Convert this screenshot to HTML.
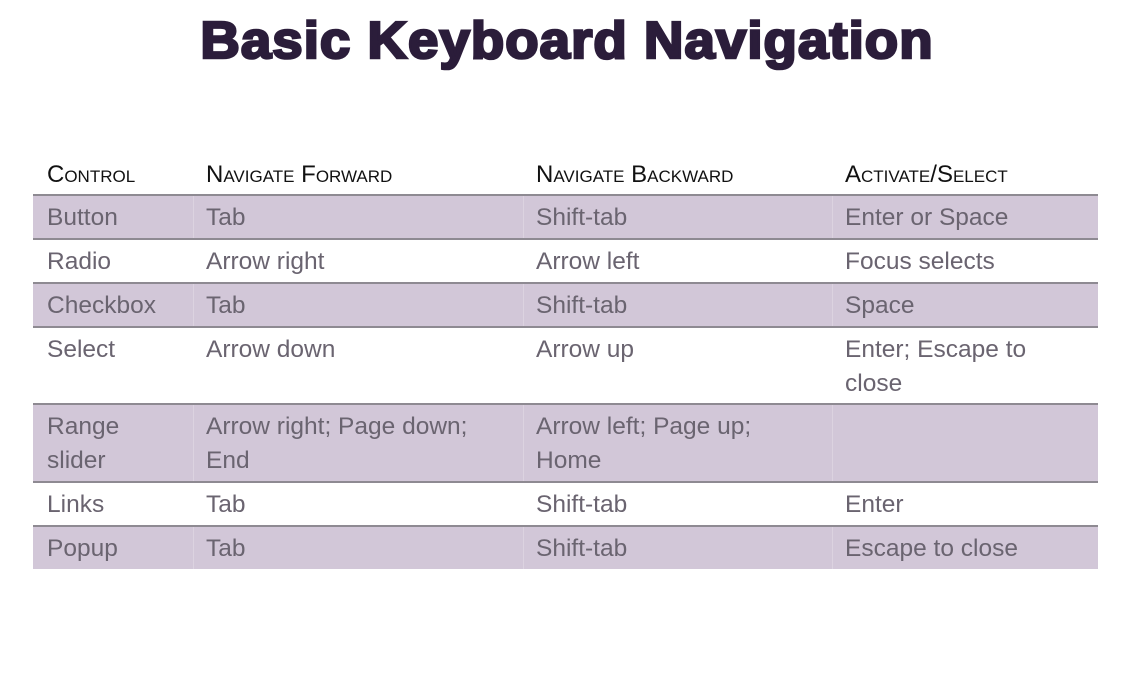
<!DOCTYPE html>
<html><head><meta charset="utf-8"><style>
body{margin:0;width:1134px;height:673px;background:#fff;position:relative;overflow:hidden;font-family:"Liberation Sans",sans-serif}
h1{position:absolute;left:0;width:1134px;top:9px;margin:0;text-align:center;font-size:52px;font-weight:900;color:#2b1d3a;-webkit-text-stroke:2.6px #2b1d3a;letter-spacing:1px;line-height:64px;transform:scaleX(1.05);transform-origin:567px 0}
.row{position:absolute;left:33px;width:1065px;border-bottom:2px solid #8e8a92;box-sizing:border-box}
.sh{background:#d2c7d8}
.c{position:absolute;top:6px;font-size:24.5px;line-height:34px;color:#6a6470}
.hd .c{color:#111;font-size:24px;font-variant:small-caps;top:3px}
.sh .v{position:absolute;top:0;bottom:0;width:1px;background:#dcd3e0}
</style></head><body>
<h1>Basic Keyboard Navigation</h1>
<div class="row hd" style="top:155px;height:41px"><span class="c" style="left:14px">Control</span><span class="c" style="left:173px">Navigate Forward</span><span class="c" style="left:503px">Navigate Backward</span><span class="c" style="left:812px">Activate/Select</span></div>
<div class="row sh" style="top:196px;height:44px"><i class="v" style="left:160px"></i><i class="v" style="left:490px"></i><i class="v" style="left:799px"></i><span class="c" style="left:14px;top:5px">Button</span><span class="c" style="left:173px;top:5px">Tab</span><span class="c" style="left:503px;top:5px">Shift-tab</span><span class="c" style="left:812px;top:5px">Enter or Space</span></div>
<div class="row" style="top:240px;height:44px"><span class="c" style="left:14px;top:5px">Radio</span><span class="c" style="left:173px;top:5px">Arrow right</span><span class="c" style="left:503px;top:5px">Arrow left</span><span class="c" style="left:812px;top:5px">Focus selects</span></div>
<div class="row sh" style="top:284px;height:44px"><i class="v" style="left:160px"></i><i class="v" style="left:490px"></i><i class="v" style="left:799px"></i><span class="c" style="left:14px;top:5px">Checkbox</span><span class="c" style="left:173px;top:5px">Tab</span><span class="c" style="left:503px;top:5px">Shift-tab</span><span class="c" style="left:812px;top:5px">Space</span></div>
<div class="row" style="top:328px;height:77px"><span class="c" style="left:14px;top:5px">Select</span><span class="c" style="left:173px;top:5px">Arrow down</span><span class="c" style="left:503px;top:5px">Arrow up</span><span class="c" style="left:812px;top:5px">Enter; Escape to<br>close</span></div>
<div class="row sh" style="top:405px;height:78px"><i class="v" style="left:160px"></i><i class="v" style="left:490px"></i><i class="v" style="left:799px"></i><span class="c" style="left:14px;top:5px">Range<br>slider</span><span class="c" style="left:173px;top:5px">Arrow right; Page down;<br>End</span><span class="c" style="left:503px;top:5px">Arrow left; Page up;<br>Home</span></div>
<div class="row" style="top:483px;height:44px"><span class="c" style="left:14px;top:5px">Links</span><span class="c" style="left:173px;top:5px">Tab</span><span class="c" style="left:503px;top:5px">Shift-tab</span><span class="c" style="left:812px;top:5px">Enter</span></div>
<div class="row sh" style="top:527px;height:42px;border-bottom:none"><i class="v" style="left:160px"></i><i class="v" style="left:490px"></i><i class="v" style="left:799px"></i><span class="c" style="left:14px;top:5px">Popup</span><span class="c" style="left:173px;top:5px">Tab</span><span class="c" style="left:503px;top:5px">Shift-tab</span><span class="c" style="left:812px;top:5px">Escape to close</span></div>
</body></html>
